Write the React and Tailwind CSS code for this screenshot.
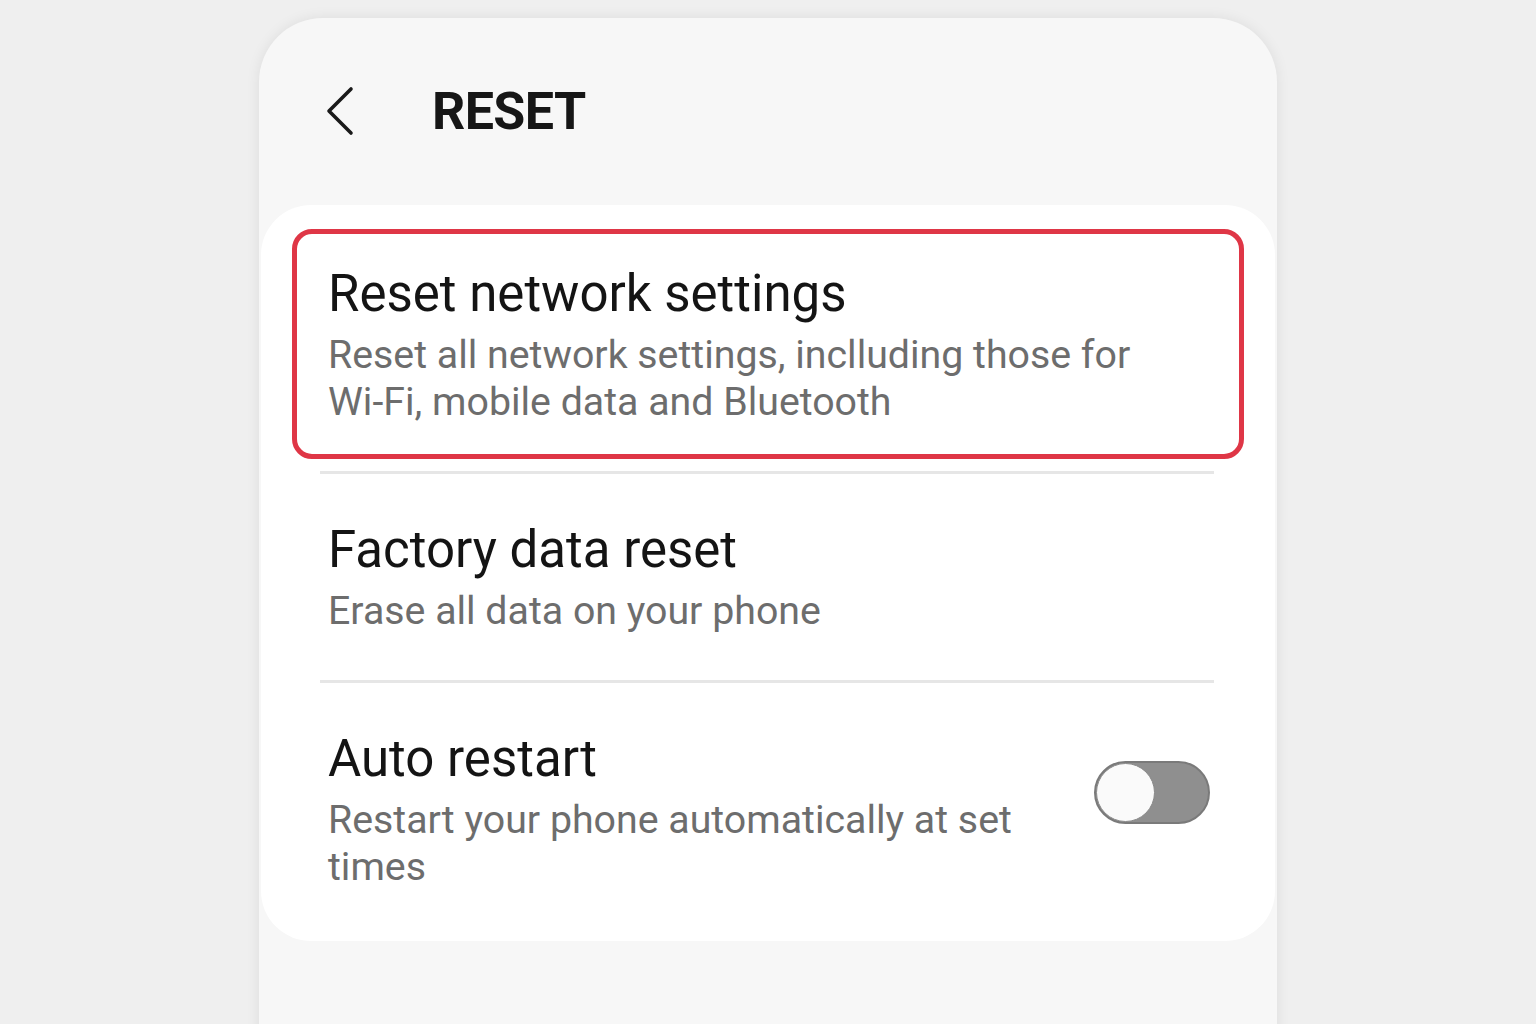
import React from 'react';

const font = { fontFamily: 'Roboto, "Noto Sans", sans-serif' };

const BackIcon = () => (
  <svg width="32" height="52" viewBox="0 0 32 52" fill="none">
    <path d="M26 3 L4 25 L26 47" stroke="#1a1a1a" strokeWidth="3.6" strokeLinecap="round" strokeLinejoin="round" />
  </svg>
);

const Toggle = () => (
  <div className="relative w-[116px] h-[63px] rounded-full bg-[#8f8f8f] border-[2px] border-[#7a7a7a] shrink-0">
    <div className="absolute left-0 top-0 w-[59px] h-[59px] rounded-full bg-[#fafafa] border border-[#8a8a8a]" />
  </div>
);

export default function App() {
  return (
    <div className="w-full h-[1024px] bg-[#efefef] overflow-hidden flex justify-center pt-[18px]" style={font}>
      <div className="w-[1018px] h-[1100px] rounded-t-[64px] bg-[#f7f7f7] shadow-[0_0_14px_rgba(0,0,0,0.08)] flex flex-col">
        {/* header */}
        <div className="h-[187px] flex items-center pl-[66px]">
          <BackIcon />
          <h1 className="ml-[75px] text-[52px] font-bold text-[#161616] tracking-[-0.6px]">RESET</h1>
        </div>

        {/* settings card */}
        <div className="mx-[2px] bg-white rounded-[50px] pt-[24px] pb-[50px] px-[31px]">
          <div className="rounded-[20px] border-[5px] border-[#df3646] pl-[31px] pr-6 pt-[32px] pb-[28px]">
            <div className="text-[51px] leading-[56px] text-[#141414]">Reset network settings</div>
            <div className="mt-[10px] text-[39.3px] leading-[47px] text-[#6d6d6d]">
              Reset all network settings, inclluding those for<br />Wi-Fi, mobile data and Bluetooth
            </div>
          </div>
          <div className="ml-[28px] mr-[30px] mt-[12px] h-[3px] bg-[#e6e6e6]" />

          <div className="pl-[36px] pt-[48px] pb-[45px]">
            <div className="text-[51px] leading-[56px] text-[#141414]">Factory data reset</div>
            <div className="mt-[10px] text-[39.3px] leading-[47px] text-[#6d6d6d]">Erase all data on your phone</div>
          </div>
          <div className="ml-[28px] mr-[30px] h-[3px] bg-[#e6e6e6]" />

          <div className="pl-[36px] pr-[34px] pt-[48px] flex items-start">
            <div className="flex-1">
              <div className="text-[51px] leading-[56px] text-[#141414]">Auto restart</div>
              <div className="mt-[10px] text-[39.3px] leading-[47px] text-[#6d6d6d] w-[720px]">
                Restart your phone automatically at set times
              </div>
            </div>
            <div className="mt-[30px]">
              <Toggle />
            </div>
          </div>
        </div>
      </div>
    </div>
  );
}
